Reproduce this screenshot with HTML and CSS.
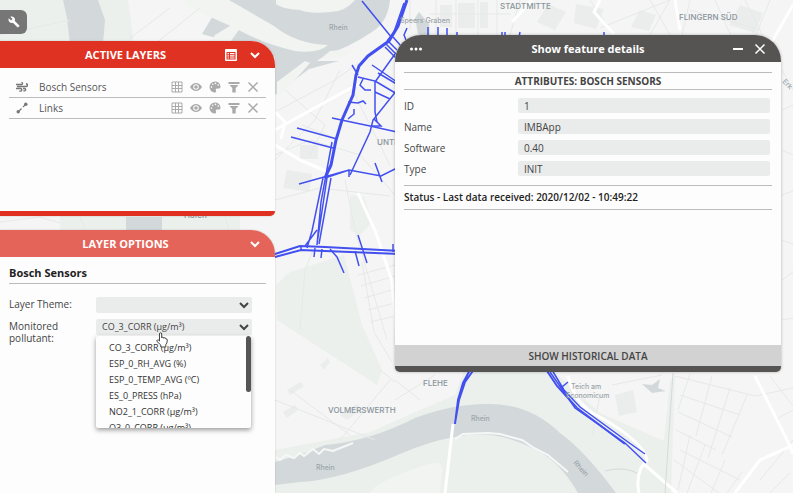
FILE: index.html
```html
<!DOCTYPE html>
<html lang="en">
  <head>
    <meta charset="UTF-8">
    <meta name="viewport" content="width=device-width, initial-scale=1">
    <title>Map viewer</title>
    <link rel="stylesheet" href="styles.css">
  </head>
  <body>
    <svg width="0" height="0" class="sprite">
      <symbol id="wrench" viewBox="0 0 24 24"><path d="M22.700 19l-9.100-9.100c.9-2.300.4-5-1.500-6.900-2-2-5-2.400-7.400-1.300L9 6 6 9 1.600 4.700C.4 7.100.9 10.100 2.900 12.100c1.900 1.900 4.600 2.400 6.900 1.500l9.100 9.100c.4.400 1 .4 1.400 0l2.300-2.300c.5-.4.500-1.100.1-1.400z"/></symbol>
      <symbol id="chevron" viewBox="0 0 12 12"><path d="M2 4l4 4 4-4" fill="none" stroke="currentColor" stroke-width="2"/></symbol>
      <symbol id="legend" viewBox="0 0 12 12"><path fill-rule="evenodd" d="M1 0h10a1 1 0 0 1 1 1v10a1 1 0 0 1-1 1H1a1 1 0 0 1-1-1V1a1 1 0 0 1 1-1zM1.500 3v7.500h9V3z"/><path d="M2.500 4h1.500v1.200H2.500zM5 4h4.500v1.200H5zM2.500 6.200h1.500v1.200H2.500zM5 6.200h4.500v1.200H5zM2.500 8.400h1.500v1.200H2.500zM5 8.400h4.500v1.200H5z"/></symbol>
      <symbol id="wind" viewBox="0 0 12 12"><path d="M0 3.500h5.500M1 5.500h9a1.400 1.400 0 0 0 0-2.800M5.500 3.500a1 1 0 0 0 0-2M0 7.500h4.500a1.300 1.300 0 1 1-1 2.200M7 7.500h1.500a1.200 1.200 0 1 1-1 2" fill="none" stroke="currentColor" stroke-width="1.400"/></symbol>
      <symbol id="link" viewBox="0 0 12 12"><path d="M2 10l8-8" fill="none" stroke="currentColor" stroke-width="1.200" stroke-dasharray="5 2"/><circle cx="2.200" cy="9.800" r="1.700"/><circle cx="9.800" cy="2.200" r="1.700"/></symbol>
      <symbol id="grid" viewBox="0 0 12 12"><path d="M1 1h10v10H1zM1 4.500h10M1 7.500h10M4.500 1v10M7.500 1v10" fill="none" stroke="currentColor"/></symbol>
      <symbol id="eye" viewBox="0 0 12 12"><path fill-rule="evenodd" d="M0 6q2.500-4 6-4t6 4q-2.500 4-6 4T0 6zM6 3.200a2.800 2.800 0 1 0 0 5.600 2.800 2.800 0 0 0 0-5.600z"/><circle cx="6" cy="6" r="1.800"/></symbol>
      <symbol id="palette" viewBox="0 0 12 12"><path fill-rule="evenodd" d="M6 .5a5.500 5.500 0 1 0 0 11c1.400 0 1.300-1.200.9-1.900-.5-1 .1-2 1.200-2h1.700c1 0 1.700-.6 1.700-1.800C11.500 2.700 9 .5 6 .5zM2.500 5.300a.8.8 0 1 1 0 1.600.8.8 0 0 1 0-1.600zM3.700 2.500a.8.8 0 1 1 0 1.600.8.8 0 0 1 0-1.600zM6.500 1.600a.8.8 0 1 1 0 1.600.8.8 0 0 1 0-1.600zM9.200 3.300a.8.8 0 1 1 0 1.600.8.8 0 0 1 0-1.600z"/></symbol>
      <symbol id="filter" viewBox="0 0 12 12"><path d="M.5 1h11v2H.5zM1.500 4h9L7.700 7v4.500H4.300V7z"/></symbol>
      <symbol id="close" viewBox="0 0 12 12"><path d="M1.500 1.500l9 9M10.500 1.500l-9 9" fill="none" stroke="currentColor" stroke-width="1.500"/></symbol>
      <symbol id="minus" viewBox="0 0 12 12"><path d="M1 6h10" stroke="currentColor" stroke-width="2"/></symbol>
      <symbol id="dots" viewBox="0 0 12 12"><circle cx="1.500" cy="6" r="1.500"/><circle cx="6" cy="6" r="1.500"/><circle cx="10.500" cy="6" r="1.500"/></symbol>
    </svg>

    <svg class="map" viewBox="0 0 793 493" preserveAspectRatio="xMidYMid slice">
      <!-- parks -->
      <g class="park">
        <path d="M0 0h128l6 45H0zM60 215h180v16H60z"/>
        <path d="M276 285l14-13 54-17 18 70 20 45-5 15-100-65zM350 195l14 2 8 25-12 13-10-5z"/>
        <path d="M275 450l95-18 50-22 35-15 10-27h85l50 45 64 28 6-60 5-5-4 117H275z"/>
      </g>
      <!-- Rhine -->
      <g class="water">
        <path d="M63 0h35l7 20-2 24H70l-3-26zM126 217h36v14h-36z"/>
        <path d="M206 0h184q-2 22-18 32-24 16-45 22l-10 7h22l-30 8-34 26v-38l-45-15-28-8 12-20 22-3z"/>
        <path d="M275 462l30-9 20-8q45-4 90-27 40-15 75-14 40 0 70 29 25 18 56 60h-38q-20-35-48-46-35-18-75-10-25 4-55 17-60 26-100 28l-25 3z"/>
        <path d="M415 18l4-6 10 12 1 14-12-4zM642 384l10 1 8-6-2 9 8 3-14 2z"/>
      </g>
      <g class="land">
        <path d="M276 0h79q-10 12-25 12-20 2-30-2-18-1-24-6zM184 0h45l45 26q22 18 54 19-10 9-33 6-32-7-62-24L190 8z"/>
        <path d="M277 82l28-21 5 2-26 29-7 5zM322 58l8-7 22-2-5 6-18 5zM215 35l18-11 8 3-10 14h-20z"/>
        <path d="M375 487q20-13 57-24 12-2 10 10l-2 20h-70z"/>
      </g>
      <path class="shore" d="M276 457l4 3 6-5 8 3 6-5 4 3 9-7 6 5 5-5 9 2 20-8M455 439l8-5 25-1 12 1 22 6 12 8 14 7 20 17"/>
      <!-- building blocks -->
      <path class="block" d="M300 145h18v14h-18zM287 170l25 4-3 18-26-4zM440 5h12v22h-12zM458 3h17v25h-17zM480 2h8v26h-8zM548 4l18 8-11 18-18-8zM576 4l28 5-8 20-22-6zM640 10l16 5-7 16-18-4zM740 5l23 8-8 20-26-8zM287 390l13-8 4 4-14 9zM283 412l12-7 3 5-11 8zM320 365l8-7 2 4-6 8zM615 395l18-5 4 22-18 4zM340 415l17-11 4 6-14 10z"/>
      <g class="roads minor">
        <path d="M275 112l60-32 55-40M275 155l35-15 50 15 35 40M285 90l40 35-15 30M340 70l-25 50-40 40M350 85l40 80M302 125l30 12M275 200l45-12 70 8M345 180l10 50 32 110M362 262l12 70 18 30M358 275l37-10M361 286l34-10M364 298l31-9M368 310l27-7M370 322l25-6M300 330l5-60 8-20M275 400l100 40M290 390l60 45M340 440l50-60M380 370l15 12"/>
        <path d="M410 0v30M436 0v35M456 0v35M478 0v35M497 0v35M430 14h80M520 0l-10 35M590 0l24 35M650 0l20 35M670 0l-20 35M690 0l-8 35M690 10l70 20M715 0l20 45M745 0l20 40M600 28l70-28M770 0l-20 50"/>
        <path d="M782 70l11 20M782 110l11-5M782 150l11 5M782 195l11-4M782 240l11 4M782 280l11-8M782 320l11-2"/>
        <path d="M675 376l80 20 38-8M680 395l60 20M678 412l54 25M676 430l40 20M674 460l45 33M690 374l-12 36M712 376l-16 60M730 388l-22 70M747 395l-25 60M680 450l60 30M690 435l-12 55M705 445l-18 48M725 460l-14 33M742 472l-15 21M770 376l23 30M775 420l18-10M760 480l33-40M770 493l20-20M600 395l-8 40M612 385l50-10M395 380l25 20M395 400l40-25"/>
        <path d="M0 222l40-5 20 6M80 217l6 14M225 216l4 15M0 35l70-15M130 38l40-30M150 48l50-40"/>
      </g>
      <g class="roads major">
        <path d="M275 130l45-25 40-22M275 112l10 10-4 17M358 193l18 40 16 48 5 60M275 145l25 15 35 15M453 424l-8 69M512 22l20-22M600 0l-6 12 20 22M675 0l5 30M755 376l35 70 3 8M735 493l25-33 33-15M645 465l32 28M568 376q8 30 30 40 45 25 49 44l-6 8q-5 12-2 25M770 45l23-40"/>
      </g>
      <path class="stream" d="M673 373l-4 60-4 60M605 471q18-5 32 2"/>
      <!-- monitored links -->
      <g class="links">
        <path class="heavy" d="M407 0l-9 26-9 15-21 15-9 10-3 9-3 20-11 25-6 20-5 25-6 13"/>
        <path d="M362 1l30 37M404 3l-10 29-7 9M352 65l6 10M332 142l-11 60-4 43M323 178l-11 53-5 17M327 178l-10 66M331 178l-12 66M317 230l-12 16"/>
        <path d="M388 41l9 9M386 44l10 10M385 47l11 11M393 37l8 9M407 28l-3 7 2 5"/>
        <path class="mid" d="M275 254l25-8 25 1 75 4M275 257l26-7 24 1 75 3"/>
        <path d="M315 248l-1 9M322 249l-1 9M330 249l7 8 7 16M355 251l4 15M358 235l9 28M301 247v4M393 252v-8"/>
        <path d="M358 77l17 4v31l2 10M372 65l25 17M378 73l22 13M375 81l22 13M375 92l15 7M395 54l-20 28M397 90l-24 30-3 12-20 43M332 118l38 8 27 6M348 102l10 1 5-2 3 3M348 119l6-5v-5M363 79l-3 6 5 5h6"/>
        <path d="M297 128l40 11M291 137l42 11M299 184l50-14 32 6 18-9M325 178l24-8M375 163l7 19M349 171v6M371 126h10l-7-7"/>
        <path d="M428 27v9M438 27v9M447 28v8M457 32v5M604 32v5M502 32v5M505 32v5M520 32l-1 5"/>
        <path class="mid" d="M471 368l-8 15-5 17-3 24M475 368l-10 14-6 18-4 23M545 368l12 18 20 22 48 36"/>
        <path d="M552 370l12 20 16 17 48 35 17 12M550 372l25 36 50 35 21 20M562 387l6-5"/>
      </g>
      <g class="labels">
        <text x="500" y="9">STADTMITTE</text>
        <text x="679" y="20">FLINGERN SÜD</text>
        <text x="377" y="145">UNTE</text>
        <text x="184" y="218">Hafen</text>
        <text x="328" y="413">VOLMERSWERTH</text>
        <text x="423" y="386">FLEHE</text>
      </g>
      <g class="labels small">
        <text x="400" y="23">Speers Graben</text>
        <text x="571" y="389">Teich am</text>
        <text x="566" y="398">Economicum</text>
        <text x="329" y="30">Rhein</text>
        <text x="471" y="421">Rhein</text>
        <text x="316" y="470">Rhein</text>
        <text transform="translate(573 463) rotate(48)">Rhein</text>
        <text transform="translate(782 82) rotate(45)">Erk</text>
      </g>
    </svg>

    <aside class="sidebar">
      <button class="tool" type="button" aria-label="Tools"><svg class="icon"><use href="#wrench"/></svg></button>

      <section class="panel layers">
        <header class="bar">
          <h2>ACTIVE LAYERS</h2>
          <div class="bar-actions">
            <button type="button" aria-label="Legend"><svg class="icon"><use href="#legend"/></svg></button>
            <button type="button" aria-label="Collapse layers"><svg class="icon"><use href="#chevron"/></svg></button>
          </div>
        </header>
        <ul class="layer-list">
          <li>
            <svg class="icon kind"><use href="#wind"/></svg>
            <span class="name">Bosch Sensors</span>
            <button type="button" aria-label="Table"><svg class="icon"><use href="#grid"/></svg></button>
            <button type="button" aria-label="Visibility"><svg class="icon"><use href="#eye"/></svg></button>
            <button type="button" aria-label="Style"><svg class="icon"><use href="#palette"/></svg></button>
            <button type="button" aria-label="Filter"><svg class="icon"><use href="#filter"/></svg></button>
            <button type="button" aria-label="Remove"><svg class="icon"><use href="#close"/></svg></button>
          </li>
          <li>
            <svg class="icon kind"><use href="#link"/></svg>
            <span class="name">Links</span>
            <button type="button" aria-label="Table"><svg class="icon"><use href="#grid"/></svg></button>
            <button type="button" aria-label="Visibility"><svg class="icon"><use href="#eye"/></svg></button>
            <button type="button" aria-label="Style"><svg class="icon"><use href="#palette"/></svg></button>
            <button type="button" aria-label="Filter"><svg class="icon"><use href="#filter"/></svg></button>
            <button type="button" aria-label="Remove"><svg class="icon"><use href="#close"/></svg></button>
          </li>
        </ul>
      </section>

      <section class="panel options">
        <header class="bar">
          <h2>LAYER OPTIONS</h2>
          <div class="bar-actions">
            <button type="button" aria-label="Collapse options"><svg class="icon"><use href="#chevron"/></svg></button>
          </div>
        </header>
        <div class="options-body">
          <h3>Bosch Sensors</h3>
          <div class="option">
            <label for="theme">Layer Theme:</label>
            <div class="select">
              <select id="theme"><option></option></select>
              <svg class="icon"><use href="#chevron"/></svg>
            </div>
          </div>
          <div class="option">
            <label for="pollutant">Monitored pollutant:</label>
            <div class="select">
              <select id="pollutant"><option>CO_3_CORR (µg/m³)</option></select>
              <svg class="icon"><use href="#chevron"/></svg>
              <ul class="menu" role="listbox">
                <li role="option">CO_3_CORR (µg/m³)</li>
                <li role="option">ESP_0_RH_AVG (%)</li>
                <li role="option">ESP_0_TEMP_AVG (ºC)</li>
                <li role="option">ES_0_PRESS (hPa)</li>
                <li role="option">NO2_1_CORR (µg/m³)</li>
                <li role="option">O3_0_CORR (µg/m³)</li>
              </ul>
              <svg class="hand" viewBox="0 0 12 16"><path d="M3.500 9V2q0-1.300 1.100-1.300T5.700 2v4q.2-1 1.200-.8t.9 1.100q.3-.8 1.200-.5t.8 1.200q1.600-.3 1.500 1.200 0 3-1.500 4.500V15h-5v-2L1 9.500q-.6-1 .4-1.500t2.100 1z"/></svg>
            </div>
          </div>
        </div>
      </section>
    </aside>

    <section class="dialog" role="dialog" aria-labelledby="dialog-title">
      <header class="bar">
        <button type="button" aria-label="Menu"><svg class="icon"><use href="#dots"/></svg></button>
        <h2 id="dialog-title">Show feature details</h2>
        <div class="bar-actions">
          <button type="button" aria-label="Minimize"><svg class="icon"><use href="#minus"/></svg></button>
          <button type="button" aria-label="Close"><svg class="icon"><use href="#close"/></svg></button>
        </div>
      </header>
      <div class="dialog-body">
        <h3>ATTRIBUTES: BOSCH SENSORS</h3>
        <div class="attributes">
          <label for="id">ID</label><input id="id" value="1" readonly>
          <label for="name">Name</label><input id="name" value="IMBApp" readonly>
          <label for="software">Software</label><input id="software" value="0.40" readonly>
          <label for="type">Type</label><input id="type" value="INIT" readonly>
        </div>
        <p class="status">Status - Last data received: 2020/12/02 - 10:49:22</p>
      </div>
      <button class="history" type="button">SHOW HISTORICAL DATA</button>
    </section>
  </body>
</html>
```
FILE: styles.css
```css
* { box-sizing: border-box }
body { color: #444; font: 10px/14px "Open Sans", "Noto Sans", sans-serif; margin: 0; min-height: 100vh; overflow: hidden; position: relative }
h2, h3, p, ul { margin: 0; padding: 0 }
ul { list-style: none }
button, input, select { border: 0; color: inherit; font: inherit; margin: 0; padding: 0 }
button { background: none; cursor: pointer }

.sprite { position: absolute }
.icon { display: block; fill: currentColor; height: 12px; width: 12px }

.map { background: #f4f5f4; height: 100%; left: 0; position: absolute; top: 0; width: 100% }
.park { fill: #ebf0ed }
.land { fill: #f2f4f2 }
.water { fill: #d3d9db }
.block { fill: #ebedec }
.shore { fill: none; stroke: #f6f8f7; stroke-width: 2 }
.roads { fill: none; stroke-linejoin: round }
.minor { stroke: #e7e9e8; stroke-width: 1 }
.major { stroke: #fff; stroke-width: 3 }
.stream { fill: none; stroke: #d5dadb }
.links { fill: none; stroke: #4350f0; stroke-width: 1.5 }
.links .mid { stroke-width: 2 }
.links .heavy { stroke-width: 3 }
.labels { fill: #8a949c; font: 500 8px Inter, sans-serif }
.labels.small { fill: #9da5aa; font-size: 7px }

.sidebar { display: flex; flex-direction: column; min-height: 100vh; padding-top: 10px; position: relative; width: 275px }
.tool { align-items: center; background: #767676; border-radius: 0 6px 6px 0; color: #fff; display: flex; height: 24px; justify-content: center; margin-bottom: 7px; width: 27px }

.bar { align-items: center; color: #fff; display: flex; height: 27px; position: relative }
.bar h2 { flex: 1; font-size: 11px; font-weight: 700; text-align: center }
.bar-actions { display: flex; gap: 12px }
.panel { background: #fdfdfd; box-shadow: 0 0 2px rgba(0, 0, 0, 0.2); border-radius: 0 24px 0 0 }
.panel .bar { border-radius: 0 24px 0 0; padding: 0 36px 0 12px }
.panel .bar-actions { position: absolute; right: 14px }

.layers { border-bottom: 5px solid #e03020; border-radius: 0 24px 5px 0; margin-bottom: 14px; min-height: 175px }
.layers .bar { background: #e03222 }
.layer-list { padding: 9px }
.layer-list li { align-items: center; border-bottom: 1px solid #bbb; color: #aaa; display: flex; gap: 7px; height: 21px; padding-right: 7px }
.layer-list .kind { color: #777; margin: 0 4px 0 7px }
.layer-list .name { color: #555; flex: 1 }

.options { flex: 1 }
.options .bar { background: #e56459 }
.options-body { padding: 6px 9px }
.options h3 { border-bottom: 1px solid #bbb; color: #222; font-size: 11px; line-height: 20px; margin-bottom: 13px }
.option { align-items: flex-start; display: flex; margin-bottom: 6px }
.option label { line-height: 12px; padding-top: 1px; width: 87px }
.select { flex: 1; font-size: 9px; margin-right: 14px; position: relative }
.select select { appearance: none; background: #eaebeb; border-radius: 2px; display: block; height: 16px; padding: 0 6px; width: 100% }
.select > .icon { pointer-events: none; position: absolute; right: 2px; top: 2px }
.menu { background: #fdfdfd; border-radius: 2px; box-shadow: 0 2px 5px rgba(0, 0, 0, 0.4); color: #333; height: 92px; left: 0; overflow: hidden; padding-top: 4px; position: absolute; right: 1px; top: 17px }
.menu li { line-height: 16px; padding-left: 13px }
.menu::after { background: #555; border-radius: 3px; content: ""; height: 56px; position: absolute; right: 0; top: 0; width: 5px }
.hand { fill: #fff; height: 16px; left: 60px; position: absolute; stroke: #444; top: 13px; width: 12px }

.dialog { background: #fdfdfd; border-bottom: 6px solid #555453; border-radius: 26px 26px 5px 5px; box-shadow: 0 0 3px rgba(0, 0, 0, 0.3); display: flex; flex-direction: column; left: 395px; min-height: 337px; position: absolute; right: 12px; top: 35px }
.dialog .bar { background: #555453; border-radius: 26px 26px 0 0; padding: 0 15px }
.dialog .bar h2 { padding-left: 22px }
.dialog .bar-actions { gap: 10px }
.dialog-body { flex: 1; padding: 10px 9px }
.dialog h3 { border: solid #bbb; border-width: 1px 0; font-size: 10px; line-height: 16px; text-align: center }
.attributes { align-items: center; display: grid; gap: 6px 0; grid-template-columns: 114px 1fr; padding: 8px 2px 9px 0 }
.attributes input { background: #eaebeb; border-radius: 2px; height: 15px; min-width: 0; padding: 0 6px; width: 100% }
.status { border: solid #bbb; border-width: 1px 0; color: #222; font-weight: 600; line-height: 23px }
.history { background: #d2d2d2; font-weight: 600; height: 21px }
```
